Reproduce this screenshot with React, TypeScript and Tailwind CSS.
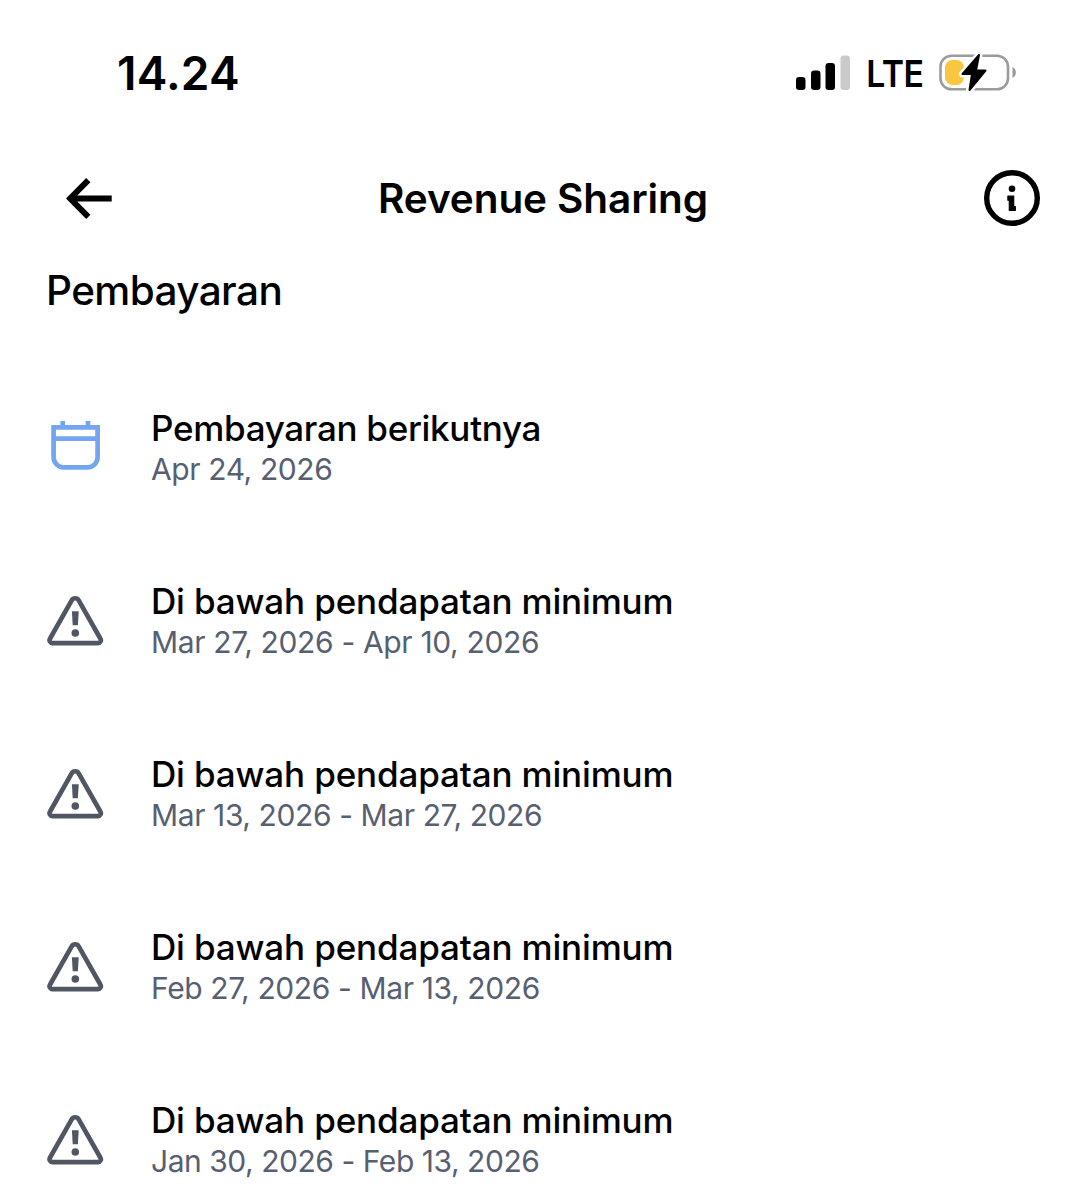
import React from 'react';

const payouts = [
  { title: 'Pembayaran berikutnya', date: 'Apr 24, 2026', kind: 'next', titleTracking: 'tracking-[-0.3px]', dateTracking: 'tracking-[-0.4px]' },
  { title: 'Di bawah pendapatan minimum', date: 'Mar 27, 2026 - Apr 10, 2026', kind: 'below', titleTracking: 'tracking-[-0.15px]', dateTracking: 'tracking-[-0.34px]' },
  { title: 'Di bawah pendapatan minimum', date: 'Mar 13, 2026 - Mar 27, 2026', kind: 'below', titleTracking: 'tracking-[-0.15px]', dateTracking: 'tracking-[-0.4px]' },
  { title: 'Di bawah pendapatan minimum', date: 'Feb 27, 2026 - Mar 13, 2026', kind: 'below', titleTracking: 'tracking-[-0.15px]', dateTracking: 'tracking-[-0.38px]' },
  { title: 'Di bawah pendapatan minimum', date: 'Jan 30, 2026 - Feb 13, 2026', kind: 'below', titleTracking: 'tracking-[-0.15px]', dateTracking: 'tracking-[-0.46px]' }
];

const SignalIcon: React.FC = () => (
  <svg width="55" height="36" viewBox="0 0 55 36">
    <rect x="0" y="22" width="9.5" height="13" rx="3.2" />
    <rect x="15" y="15.5" width="9.5" height="19.5" rx="3.2" />
    <rect x="29.5" y="8" width="9.5" height="27" rx="3.2" />
    <rect x="44.5" y="0.5" width="9.5" height="34.5" rx="3.2" fill="#cacaca" />
  </svg>
);

const BatteryIcon: React.FC = () => (
  <svg width="78" height="40" viewBox="0 0 78 40" fill="none">
    <rect x="1.5" y="2.700" width="67.5" height="33.6" rx="11" stroke="#9b9b9b" strokeWidth="2.6" />
    <path d="M73.5 14c2.2 1.1 3.4 3.2 3.4 5.5s-1.2 4.4-3.4 5.5z" fill="#9b9b9b" />
    <rect x="6" y="7" width="19" height="25" rx="7.5" fill="#f8c73f" />
    <path
      d="M40 2L23.5 21h9.5L30.5 37L46.5 17.5h-9.5z"
      fill="#fff"
      stroke="#fff"
      strokeWidth="7"
      strokeLinejoin="round"
    />
    <path
      d="M40 2L23.5 21h9.5L30.5 37L46.5 17.5h-9.5z"
      fill="#000"
      stroke="#000"
      strokeWidth="2"
      strokeLinejoin="round"
    />
  </svg>
);

const BackIcon: React.FC = () => (
  <svg width="46" height="41" viewBox="0 0 46 41" fill="none" stroke="#000" strokeWidth="6">
    <path d="M22.3 2.2L4.2 20.5L22.3 38.8M4.2 20.5H45.7" />
  </svg>
);

const InfoIcon: React.FC = () => (
  <svg width="56" height="56" viewBox="0 0 56 56">
    <circle cx="28" cy="28" r="25.3" fill="none" stroke="#000" strokeWidth="5.4" />
    <circle cx="28" cy="18.7" r="3.3" />
    <path
      d="M23.9 26.2h5.8v10.3h1.6v4h-6v-10.300h-1.400z"
      stroke="#000"
      strokeWidth="1.2"
      strokeLinejoin="round"
    />
  </svg>
);

const CalendarIcon: React.FC = () => (
  <svg width="56" height="56" viewBox="0 0 56 56" fill="none" stroke="#73a5f0" strokeWidth="4.7">
    <path d="M6.6 9.3H50.6V39.3a10 10 0 0 1-10 10H16.6a10 10 0 0 1-10-10z" />
    <path d="M6.6 20.7H50.6M15.7 3v6M41 3v6" />
  </svg>
);

const WarningIcon: React.FC = () => (
  <svg width="57" height="56" viewBox="0 0 57 56">
    <path
      d="M24.7 9.3L3.1 47.5a3 3 0 0 0 2.7 4.7H50.6a3 3 0 0 0 2.7-4.7L31.7 9.3a4 4 0 0 0-7 0z"
      fill="none"
      stroke="#505763"
      strokeWidth="4.7"
    />
    <path d="M24.9 20.2h6.8l-.8 14h-5.2z" fill="#505763" />
    <circle cx="28.3" cy="42" r="3.8" fill="#505763" />
  </svg>
);

export default function App() {
  return (
    <div className="h-[1200px] w-full overflow-hidden bg-white font-['Inter',sans-serif] text-black">
      {/* Status bar */}
      <div className="flex h-[145px] items-center justify-between pr-[72px] pl-[117px]">
        <span className="text-[46px] leading-none font-semibold tracking-[0.2px]">14.24</span>
        <div className="flex items-center">
          <SignalIcon />
          <span className="ml-[9px] origin-right scale-x-[0.9] pt-[2px] text-[37.5px] leading-none font-semibold tracking-[-0.6px]">
            LTE
          </span>
          <div className="ml-[16px]">
            <BatteryIcon />
          </div>
        </div>
      </div>

      {/* Header */}
      <header className="grid h-[106px] grid-cols-[1fr_auto_1fr] items-center pr-[49px] pl-[46px]">
        <button aria-label="Kembali" className="pl-[20px]">
          <BackIcon />
        </button>
        <h1 className="pt-[2px] text-[40.5px] leading-none font-[620] tracking-[-0.1px]">Revenue Sharing</h1>
        <button aria-label="Info" className="justify-self-end">
          <InfoIcon />
        </button>
      </header>

      <h2 className="flex h-[81px] items-center pl-[46px] text-[40.5px] leading-none font-[550] tracking-[-0.6px]">Pembayaran</h2>

      {/* Payout list */}
      <ul className="pt-[30px]">
        {payouts.map((payout, i) => (
          <li key={i} className="flex h-[173px] items-center pl-[47px]">
            <div className="mb-[6px] w-[104px] shrink-0">
              {payout.kind === 'next' ? <CalendarIcon /> : <WarningIcon />}
            </div>
            <div className="whitespace-nowrap">
              <div className={`text-[35px] leading-[41px] font-[550] ${payout.titleTracking}`}>{payout.title}</div>
              <div className={`text-[30px] leading-[41px] text-[#576070] ${payout.dateTracking}`}>{payout.date}</div>
            </div>
          </li>
        ))}
      </ul>
    </div>
  );
}
